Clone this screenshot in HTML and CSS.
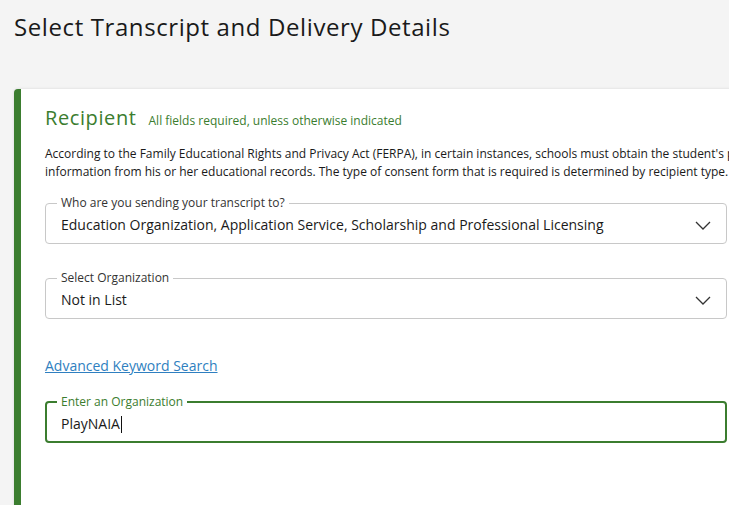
FILE: index.html
```html
<!DOCTYPE html>
<html>
<head>
<meta charset="utf-8">
<link rel="stylesheet" href="styles.css">
</head>
<body>
<div class="page">
  <h1 class="title">Select Transcript and Delivery Details</h1>
  <section class="card">
    <div class="card-head">
      <h2 class="card-title">Recipient</h2>
      <span class="req">All fields required, unless otherwise indicated</span>
    </div>
    <p class="intro">According to the Family Educational Rights and Privacy Act (FERPA), in certain instances, schools must obtain the student's permission to release information from his or her educational records. The type of consent form that is required is determined by recipient type.</p>
    <fieldset class="field field-select first">
      <legend>Who are you sending your transcript to?</legend>
      <div class="value">Education Organization, Application Service, Scholarship and Professional Licensing</div>
      <svg class="chev" width="16" height="9" viewBox="0 0 16 9"><path d="M1 1 L8 8 L15 1" fill="none" stroke="#333" stroke-width="1.3"/></svg>
    </fieldset>
    <fieldset class="field field-select second">
      <legend>Select Organization</legend>
      <div class="value">Not in List</div>
      <svg class="chev" width="16" height="9" viewBox="0 0 16 9"><path d="M1 1 L8 8 L15 1" fill="none" stroke="#333" stroke-width="1.3"/></svg>
    </fieldset>
    <a class="link" href="#">Advanced Keyword Search</a>
    <fieldset class="field active">
      <legend>Enter an Organization</legend>
      <div class="value">PlayNAIA<span class="caret"></span></div>
    </fieldset>
  </section>
</div>
</body>
</html>
```
FILE: styles.css
```css
html, body {
  margin: 0;
  padding: 0;
  background: #f4f4f4;
  overflow: hidden;
}
.page {
  padding: 0 0 0 14px;
  height: 505px;
  overflow: hidden;
}
.title {
  margin: 0;
  padding-top: 11px;
  height: 89px;
  box-sizing: border-box;
  font-family: "Open Sans", sans-serif;
  font-weight: 400;
  font-size: 24px;
  line-height: 32px;
  color: #1a1a1a;
  letter-spacing: 0.6px;
}
.card {
  width: 1000px;
  height: 600px;
  background: #fff;
  border-left: 7px solid #3b7d2f;
  border-radius: 4px 0 0 0;
  box-shadow: 0 0 3px rgba(0,0,0,0.12);
  padding: 14px 0 0 24px;
  box-sizing: border-box;
  font-family: "Open Sans", sans-serif;
  color: #222;
}
.card-head {
  display: flex;
  align-items: baseline;
  gap: 12px;
  height: 30px;
}
.card-title {
  margin: 0;
  font-family: "Open Sans", sans-serif;
  font-weight: 400;
  font-size: 20px;
  line-height: 30px;
  letter-spacing: 0.6px;
  color: #3b7d2f;
}
.req {
  font-size: 12px;
  color: #3b7d2f;
}
.intro {
  margin: 12px 0 0 0;
  width: 830px;
  font-size: 12px;
  line-height: 18px;
  color: #1a1a1a;
}
.field {
  width: 682px;
  box-sizing: border-box;
  margin: 0;
  border: 1px solid #c8c8c8;
  border-radius: 4px;
  padding: 0 15px 8px 15px;
  position: relative;
}
.field legend {
  padding: 0 4px;
  margin-left: -4px;
  font-size: 12px;
  line-height: 14px;
  color: #333;
}
.field .value {
  margin-top: 5px;
  font-size: 14px;
  line-height: 20px;
  color: #1a1a1a;
}
.chev {
  position: absolute;
  right: 15px;
  top: 11px;
}
.first {
  margin-top: 15px;
}
.second {
  margin-top: 27px;
}
.link {
  display: inline-block;
  margin-top: 37px;
  font-size: 14px;
  line-height: 20px;
  color: #2f7fc0;
  text-decoration: underline;
}
.active {
  margin-top: 19px;
  border: 2px solid #3b7d2f;
  padding: 0 14px 7px 14px;
}
.active legend {
  color: #3b7d2f;
}
.caret {
  display: inline-block;
  width: 1px;
  height: 17px;
  background: #111;
  vertical-align: -4px;
  margin-left: 1px;
}
```
